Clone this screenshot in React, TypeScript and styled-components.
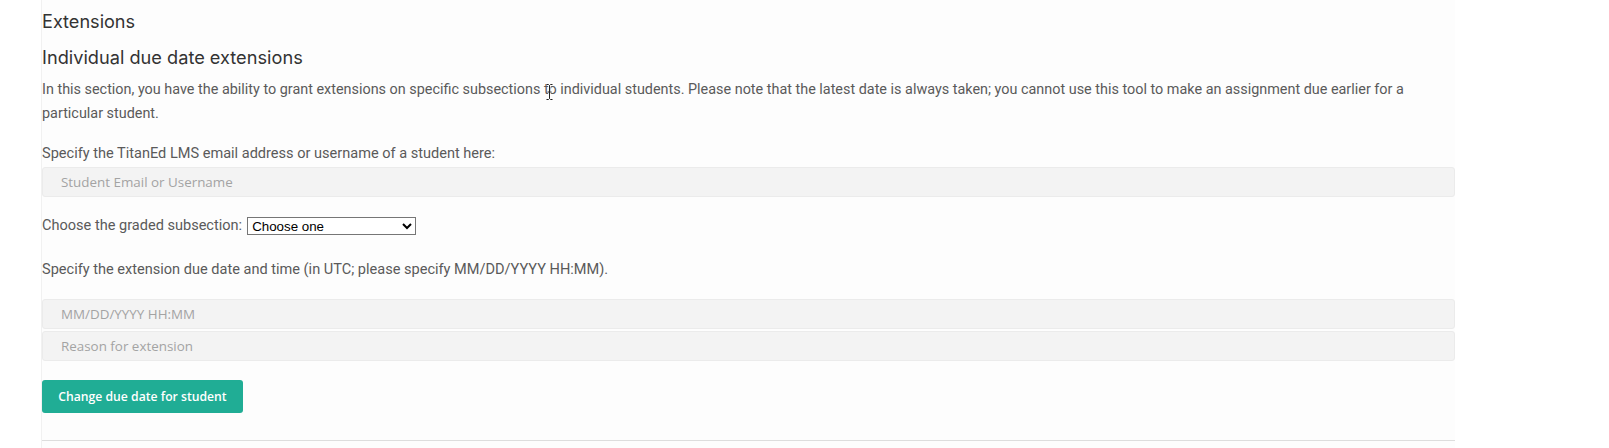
import React from "react";
import styled, { createGlobalStyle } from "styled-components";

const GlobalStyle = createGlobalStyle`
  html, body { margin: 0; padding: 0; background: #ffffff; }
  body { font-family: Roboto, "Liberation Sans", sans-serif; }
`;

const Page = styled.div`
  position: relative;
  width: 1609px;
  height: 448px;
  overflow: hidden;
  background: #ffffff;
`;

const Panel = styled.section`
  margin-left: 41px;
  width: 1414px;
  min-height: 448px;
  box-sizing: border-box;
  border-left: 1px solid #f1f1f1;
  background: #fdfdfd;
  padding-top: 9px;
`;

const SectionTitle = styled.h2`
  margin: 0;
  font-family: Inter, "Open Sans", sans-serif;
  font-weight: 400;
  font-size: 18.1px;
  line-height: 24px;
  color: #333333;
`;

const SubTitle = styled.h3`
  margin: 11px 0 0;
  font-family: Inter, "Open Sans", sans-serif;
  font-weight: 400;
  font-size: 18.2px;
  line-height: 26px;
  color: #333333;
`;

const Text = styled.p<{ $mt?: number; $label?: boolean }>`
  margin: ${(p) => p.$mt ?? 0}px 0 0;
  font-family: Roboto, "Liberation Sans", sans-serif;
  font-size: ${(p) => (p.$label ? 14.55 : 14.4)}px;
  line-height: 24px;
  color: #5a5a5a;
`;

const Field = styled.input<{ $mt?: number }>`
  display: block;
  box-sizing: border-box;
  width: 100%;
  height: 30px;
  margin: ${(p) => p.$mt ?? 0}px 0 0;
  padding: 0 18px;
  border: 1px solid #ebebeb;
  border-radius: 3px;
  background: #f3f3f3;
  font-family: "Open Sans", sans-serif;
  font-size: 13.4px;
  color: #333;
  outline: none;
  &::placeholder { color: #a3a3a3; }
`;

const SelectRow = styled.div`
  display: flex;
  align-items: center;
  margin-top: 17px;
  font-family: Roboto, "Liberation Sans", sans-serif;
  font-size: 14.55px;
  line-height: 24px;
  color: #5a5a5a;
  gap: 5px;
`;

const Select = styled.select`
  width: 169px;
  height: 18px;
  padding: 0;
  font-family: "Liberation Sans", Arial, sans-serif;
  font-size: 13.33px;
  color: #000;
  border: 1px solid #767676;
  border-radius: 0;
  background: #fff;
`;

const Button = styled.button`
  display: block;
  margin-top: 19px;
  width: 201px;
  height: 33px;
  border: none;
  border-radius: 3px;
  background: #20ad95;
  color: #ffffff;
  font-family: "Open Sans", sans-serif;
  font-weight: 600;
  font-size: 12.2px;
  cursor: pointer;
`;

const Rule = styled.hr`
  margin: 27px 0 0;
  border: none;
  border-top: 1px solid #dddddd;
`;

const Cursor = styled.svg`
  position: absolute;
  left: 546px;
  top: 84px;
  pointer-events: none;
`;

export default function App() {
  return (
    <Page>
      <GlobalStyle />
      <Panel>
        <SectionTitle>Extensions</SectionTitle>
        <SubTitle>Individual due date extensions</SubTitle>
        <Text $mt={8}>
          In this section, you have the ability to grant extensions on specific subsections to individual students. Please note that the latest date is always taken; you cannot use this tool to make an assignment due earlier for a particular student.
        </Text>
        <Text $mt={16} $label>Specify the TitanEd LMS email address or username of a student here:</Text>
        <Field $mt={1} type="text" placeholder="Student Email or Username" />
        <SelectRow>
          <span>Choose the graded subsection:</span>
          <Select defaultValue="">
            <option value="">Choose one</option>
          </Select>
        </SelectRow>
        <Text $mt={20} $label>Specify the extension due date and time (in UTC; please specify MM/DD/YYYY HH:MM).</Text>
        <Field $mt={17} type="text" placeholder="MM/DD/YYYY HH:MM" />
        <Field $mt={2} type="text" placeholder="Reason for extension" />
        <Button>Change due date for student</Button>
        <Rule />
      </Panel>
      <Cursor width="7" height="16" viewBox="0 0 7 16">
        <path d="M0.5 0.5h2l1 1 1-1h2M3.5 1.5v13M0.5 15.5h2l1-1 1 1h2M1.5 8h4" stroke="#ffffff" strokeWidth="2" fill="none" />
        <path d="M0.5 0.5h2l1 1 1-1h2M3.5 1.5v13M0.5 15.5h2l1-1 1 1h2M1.5 8h4" stroke="#222222" strokeWidth="1" fill="none" />
      </Cursor>
    </Page>
  );
}
